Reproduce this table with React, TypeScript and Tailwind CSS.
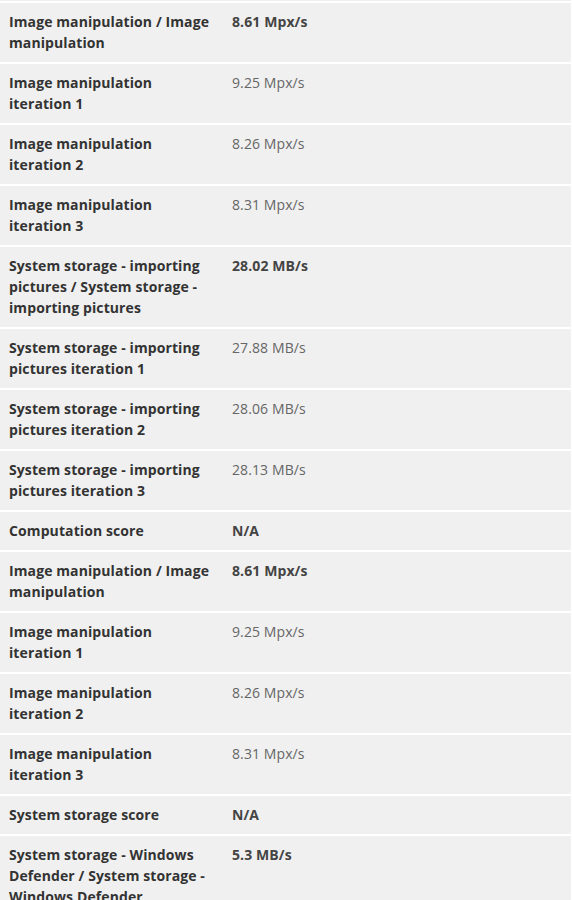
const rows: { label: string; value: string; strong?: boolean }[] = [
  { label: 'Image manipulation / Image manipulation', value: '8.61 Mpx/s', strong: true },
  { label: 'Image manipulation iteration 1', value: '9.25 Mpx/s' },
  { label: 'Image manipulation iteration 2', value: '8.26 Mpx/s' },
  { label: 'Image manipulation iteration 3', value: '8.31 Mpx/s' },
  { label: 'System storage - importing pictures / System storage - importing pictures', value: '28.02 MB/s', strong: true },
  { label: 'System storage - importing pictures iteration 1', value: '27.88 MB/s' },
  { label: 'System storage - importing pictures iteration 2', value: '28.06 MB/s' },
  { label: 'System storage - importing pictures iteration 3', value: '28.13 MB/s' },
  { label: 'Computation score', value: 'N/A', strong: true },
  { label: 'Image manipulation / Image manipulation', value: '8.61 Mpx/s', strong: true },
  { label: 'Image manipulation iteration 1', value: '9.25 Mpx/s' },
  { label: 'Image manipulation iteration 2', value: '8.26 Mpx/s' },
  { label: 'Image manipulation iteration 3', value: '8.31 Mpx/s' },
  { label: 'System storage score', value: 'N/A', strong: true },
  { label: 'System storage - Windows Defender / System storage - Windows Defender', value: '5.3 MB/s', strong: true },
  { label: 'System storage - Windows Defender iteration 1', value: '5.29 MB/s' },
];

export default function App() {
  return (
    <div className="h-[900px] overflow-hidden bg-white font-['Open_Sans',sans-serif] text-[14px] leading-[21px] tracking-[0.1px]">
      <div className="w-[571px]">
        <div className="h-px bg-[#f0f0f0]" />
        {rows.map((row, i) => (
          <div key={i} className="grid grid-cols-[223px_1fr] border-t-2 border-white bg-[#f0f0f0]">
            <div className="pl-[9px] pr-[9px] pt-2 pb-[9px] font-bold text-[#333]">{row.label}</div>
            <div className={row.strong ? 'pl-[9px] pt-2 pb-[9px] font-bold text-[#444]' : 'pl-[9px] pt-2 pb-[9px] text-[#666]'}>
              {row.value}
            </div>
          </div>
        ))}
      </div>
    </div>
  );
}
